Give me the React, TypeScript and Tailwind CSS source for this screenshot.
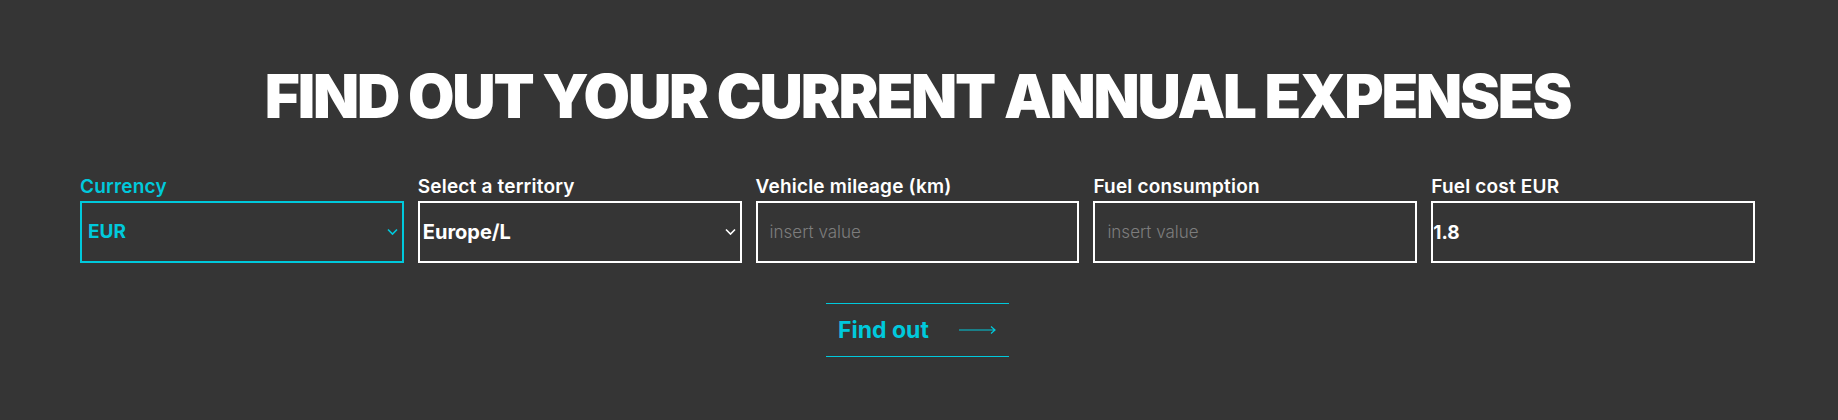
import React, { useState } from 'react';

const font = { fontFamily: 'Inter, Roboto, "Liberation Sans", sans-serif' };

const Chevron: React.FC<{ color: string }> = ({ color }) => (
  <svg
    width="11"
    height="7"
    viewBox="0 0 11 7"
    className="pointer-events-none absolute right-[6px] top-1/2 -translate-y-1/2"
  >
    <path d="M1 1l4.5 4.5L10 1" fill="none" stroke={color} strokeWidth="1.6" />
  </svg>
);

const App: React.FC = () => {
  const [currency, setCurrency] = useState('EUR');
  const [territory, setTerritory] = useState('Europe/L');
  const [mileage, setMileage] = useState('');
  const [consumption, setConsumption] = useState('');
  const [cost, setCost] = useState('1.8');

  return (
    <div
      className="min-h-[420px] w-full bg-[#353535] pl-[80px] pr-[83px] pt-[63px]"
      style={font}
    >
      <h2 className="text-center text-[60px] leading-[66px] font-black uppercase tracking-[-0.036em] text-white">
        Find out your current annual expenses
      </h2>

      <form onSubmit={(e) => e.preventDefault()} className="mt-[47px]">
        <div className="grid grid-cols-5 gap-[14px]">
          {/* Currency */}
          <div className="flex flex-col">
            <label className="mb-[3px] text-[19px] leading-[22px] font-semibold tracking-[0.01em] text-[#00c9dc]">
              Currency
            </label>
            <div className="relative">
              <select
                value={currency}
                onChange={(e) => setCurrency(e.target.value)}
                className="h-[62px] w-full appearance-none border-2 border-[#00c9dc] bg-transparent pl-[6px] text-[19px] font-bold text-[#00c9dc] outline-none"
              >
                <option value="EUR">EUR</option>
                <option value="USD">USD</option>
                <option value="GBP">GBP</option>
              </select>
              <Chevron color="#00c9dc" />
            </div>
          </div>

          {/* Territory */}
          <div className="flex flex-col">
            <label className="mb-[3px] text-[19px] leading-[22px] font-semibold tracking-[0.01em] text-white">
              Select a territory
            </label>
            <div className="relative">
              <select
                value={territory}
                onChange={(e) => setTerritory(e.target.value)}
                className="h-[62px] w-full appearance-none border-2 border-white bg-transparent pl-[3px] text-[20px] font-bold text-white outline-none"
              >
                <option value="Europe/L">Europe/L</option>
                <option value="US/Gal">US/Gal</option>
              </select>
              <Chevron color="#ffffff" />
            </div>
          </div>

          {/* Mileage */}
          <div className="flex flex-col">
            <label className="mb-[3px] text-[19px] leading-[22px] font-semibold tracking-[0.01em] text-white">
              Vehicle mileage (km)
            </label>
            <input
              type="text"
              value={mileage}
              onChange={(e) => setMileage(e.target.value)}
              placeholder="insert value"
              className="h-[62px] w-full border-2 border-white bg-transparent px-[12px] text-[17px] font-light text-white outline-none placeholder:text-[#7d7d7d]"
            />
          </div>

          {/* Consumption */}
          <div className="flex flex-col">
            <label className="mb-[3px] text-[19px] leading-[22px] font-semibold tracking-[0.01em] text-white">
              Fuel consumption
            </label>
            <input
              type="text"
              value={consumption}
              onChange={(e) => setConsumption(e.target.value)}
              placeholder="insert value"
              className="h-[62px] w-full border-2 border-white bg-transparent px-[12px] text-[17px] font-light text-white outline-none placeholder:text-[#7d7d7d]"
            />
          </div>

          {/* Cost */}
          <div className="flex flex-col">
            <label className="mb-[3px] text-[19px] leading-[22px] font-semibold tracking-[0.01em] text-white">
              Fuel cost EUR
            </label>
            <input
              type="text"
              value={cost}
              onChange={(e) => setCost(e.target.value)}
              className="h-[62px] w-full border-2 border-white bg-transparent px-0 text-[19px] font-bold text-white outline-none"
            />
          </div>
        </div>

        <div className="mt-[40px] flex justify-center">
          <button
            type="submit"
            className="flex h-[54px] w-[183px] items-center justify-between border-y border-[#00c9dc] pl-[12px] pr-[12px] text-[23px] font-bold text-[#00c9dc]"
          >
            <span>Find out</span>
            <svg width="38" height="10" viewBox="0 0 38 10">
              <path
                d="M0 5h36M32 1.5L36 5l-4 3.5"
                fill="none"
                stroke="#00c9dc"
                strokeWidth="1.2"
              />
            </svg>
          </button>
        </div>
      </form>
    </div>
  );
};

export default App;
